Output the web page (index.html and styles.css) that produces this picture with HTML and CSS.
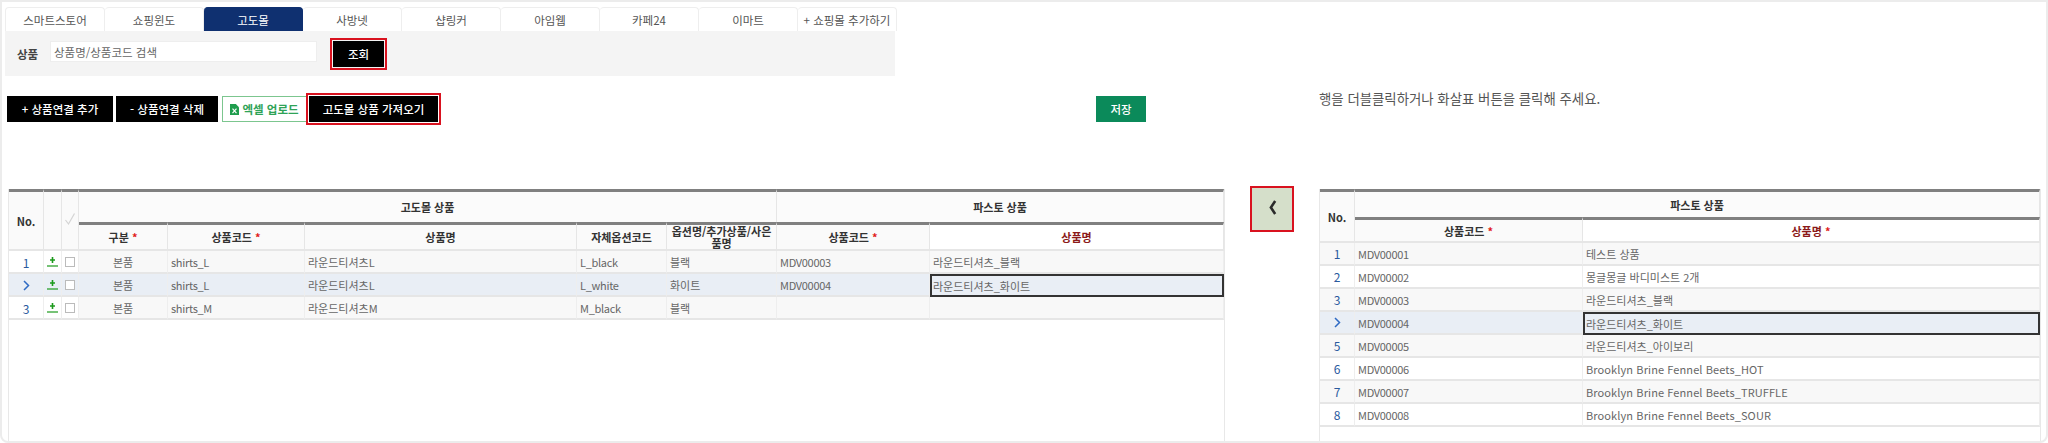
FILE: index.html
```html
<!DOCTYPE html>
<html lang="ko">
<head>
  <meta charset="UTF-8">
  <title>상품연결</title>
  <link rel="stylesheet" href="styles.css">
</head>
<body>
  <div class="frame">
    <section class="left-panel">
      <div class="tabs">
        <a class="tab">스마트스토어</a>
        <a class="tab">쇼핑윈도</a>
        <a class="tab active">고도몰</a>
        <a class="tab">사방넷</a>
        <a class="tab">샵링커</a>
        <a class="tab">아임웹</a>
        <a class="tab">카페24</a>
        <a class="tab">이마트</a>
        <a class="tab">+ 쇼핑몰 추가하기</a>
      </div>
      <div class="search-bar">
        <span class="search-label">상품</span>
        <input class="search-input" type="text" placeholder="상품명/상품코드 검색">
        <button class="btn btn-black btn-search marked">조회</button>
      </div>
      <div class="actions">
        <button class="btn btn-black btn-add">+ 상품연결 추가</button>
        <button class="btn btn-black btn-del">- 상품연결 삭제</button>
        <button class="btn btn-excel">
          <svg class="excel-icon" viewBox="0 0 10 12"><path d="M0 0h6.5L10 3.5V12H0z" fill="#1f9d4d"/><path d="M2.8 5l4.4 5M7.2 5l-4.4 5" stroke="#fff" stroke-width="1.3"/></svg>
          엑셀 업로드
        </button>
        <button class="btn btn-black btn-import marked">고도몰 상품 가져오기</button>
        <button class="btn btn-save">저장</button>
      </div>
      <div class="grid grid-left">
        <table>
          <colgroup>
            <col class="c-no"><col class="c-icon"><col class="c-check"><col class="c-type"><col class="c-code"><col class="c-name"><col class="c-opt"><col class="c-optname"><col class="c-fcode"><col>
          </colgroup>
          <thead>
            <tr class="head-top">
              <th rowspan="2">No.</th>
              <th rowspan="2"></th>
              <th rowspan="2" class="check-head">
                <svg class="check-mark" viewBox="0 0 12 14"><path d="M1.5 8l3 4L10.5 1.5" fill="none" stroke="#d4d4d4" stroke-width="1.2"/></svg>
              </th>
              <th colspan="5" class="group">고도몰 상품</th>
              <th colspan="2" class="group">파스토 상품</th>
            </tr>
            <tr class="head-sub">
              <th class="sub">구분 <i>*</i></th>
              <th class="sub">상품코드 <i>*</i></th>
              <th class="sub">상품명</th>
              <th class="sub">자체옵션코드</th>
              <th class="sub wrap">옵션명/추가상품/사은품명</th>
              <th class="sub">상품코드 <i>*</i></th>
              <th class="sub target">상품명</th>
            </tr>
          </thead>
          <tbody>
            <tr>
              <td class="no">1</td>
              <td class="tool"><svg class="plus" viewBox="0 0 11 10"><path d="M5.5 0v6M3 3h5" stroke="#1c9a1c" stroke-width="1.6"/><path d="M0 9h11" stroke="#1c9a1c" stroke-width="1.2"/></svg></td>
              <td class="tool"><span class="box"></span></td>
              <td class="ro center">본품</td><td class="ro en">shirts_L</td><td class="ro">라운드티셔츠L</td><td class="ro en">L_black</td><td class="ro">블랙</td><td class="ro en">MDV00003</td><td class="ro">라운드티셔츠_블랙</td>
            </tr>
            <tr class="selected">
              <td class="no"><svg class="pointer" viewBox="0 0 7 11"><path d="M1 1l4.5 4.5L1 10" fill="none" stroke="#2f6bc4" stroke-width="1.5"/></svg></td>
              <td class="tool"><svg class="plus" viewBox="0 0 11 10"><path d="M5.5 0v6M3 3h5" stroke="#1c9a1c" stroke-width="1.6"/><path d="M0 9h11" stroke="#1c9a1c" stroke-width="1.2"/></svg></td>
              <td class="tool"><span class="box"></span></td>
              <td class="ro center">본품</td><td class="ro en">shirts_L</td><td class="ro">라운드티셔츠L</td><td class="ro en">L_white</td><td class="ro">화이트</td><td class="ro en">MDV00004</td><td class="ro focus">라운드티셔츠_화이트</td>
            </tr>
            <tr>
              <td class="no">3</td>
              <td class="tool"><svg class="plus" viewBox="0 0 11 10"><path d="M5.5 0v6M3 3h5" stroke="#1c9a1c" stroke-width="1.6"/><path d="M0 9h11" stroke="#1c9a1c" stroke-width="1.2"/></svg></td>
              <td class="tool"><span class="box"></span></td>
              <td class="ro center">본품</td><td class="ro en">shirts_M</td><td class="ro">라운드티셔츠M</td><td class="ro en">M_black</td><td class="ro">블랙</td><td class="ro"></td><td class="ro"></td>
            </tr>
          </tbody>
        </table>
      </div>
    </section>

    <div class="move-col">
      <button class="move-btn">
        <svg viewBox="0 0 8 14"><path d="M6.5 1L2.5 7l4 6" fill="none" stroke="#2b2b2b" stroke-width="2.4"/></svg>
      </button>
    </div>

    <section class="right-panel">
      <p class="notice">행을 더블클릭하거나 화살표 버튼을 클릭해 주세요.</p>
      <div class="grid grid-right">
        <table>
          <colgroup>
            <col class="c-no"><col class="c-rcode"><col>
          </colgroup>
          <thead>
            <tr class="head-top">
              <th rowspan="2">No.</th>
              <th colspan="2" class="group">파스토 상품</th>
            </tr>
            <tr class="head-sub">
              <th class="sub">상품코드 <i>*</i></th>
              <th class="sub target">상품명 <i>*</i></th>
            </tr>
          </thead>
          <tbody>
            <tr class="gray"><td class="no">1</td><td class="en">MDV00001</td><td>테스트 상품</td></tr>
            <tr><td class="no">2</td><td class="en">MDV00002</td><td>몽글몽글 바디미스트 2개</td></tr>
            <tr class="gray"><td class="no">3</td><td class="en">MDV00003</td><td>라운드티셔츠_블랙</td></tr>
            <tr class="selected">
              <td class="no"><svg class="pointer" viewBox="0 0 7 11"><path d="M1 1l4.5 4.5L1 10" fill="none" stroke="#2f6bc4" stroke-width="1.5"/></svg></td>
              <td class="en">MDV00004</td><td class="focus">라운드티셔츠_화이트</td>
            </tr>
            <tr class="gray"><td class="no">5</td><td class="en">MDV00005</td><td>라운드티셔츠_아이보리</td></tr>
            <tr><td class="no">6</td><td class="en">MDV00006</td><td class="en-name">Brooklyn Brine Fennel Beets_HOT</td></tr>
            <tr class="gray"><td class="no">7</td><td class="en">MDV00007</td><td class="en-name">Brooklyn Brine Fennel Beets_TRUFFLE</td></tr>
            <tr><td class="no">8</td><td class="en">MDV00008</td><td class="en-name">Brooklyn Brine Fennel Beets_SOUR</td></tr>
          </tbody>
        </table>
      </div>
    </section>
  </div>
</body>
</html>
```

FILE: styles.css
```css
* {
  box-sizing: border-box;
  margin: 0;
  padding: 0;
}

html,
body {
  height: 443px;
  overflow: hidden;
}

body {
  font-family: "Noto Sans CJK KR", "Noto Sans", sans-serif;
  font-size: 11px;
  color: #666;
  background: #fff;
}

.frame {
  display: flex;
  height: 443px;
  padding: 5px 5px 0 3px;
  border: 2px solid #ececec;
  border-radius: 0 0 8px 8px;
}

/* 왼쪽 영역 */
.left-panel {
  display: flex;
  flex-direction: column;
  width: 1219px;
  flex: none;
}

.tabs {
  display: flex;
  height: 24px;
  width: 892px;
}

.tab {
  flex: 1;
  display: flex;
  align-items: center;
  justify-content: center;
  font-size: 11.5px;
  color: #555;
  border: 1px solid #eee;
  border-bottom: none;
  border-left: none;
  border-radius: 4px 4px 0 0;
  white-space: nowrap;
}

.tab:first-child {
  border-left: 1px solid #eee;
}

.tab.active {
  background: #0f3070;
  border-color: #0f3070;
  color: #fff;
}

.search-bar {
  display: flex;
  align-items: flex-start;
  width: 890px;
  height: 45px;
  padding: 10px 0 0 12px;
  background: #f4f4f4;
}

.search-label {
  width: 33px;
  line-height: 26px;
  font-weight: 700;
  font-size: 11.5px;
  color: #444;
}

.search-input {
  width: 267px;
  height: 21px;
  padding: 0 3px;
  border: 1px solid #eee;
  background: #fff;
  font: 11.5px "Noto Sans CJK KR", sans-serif;
}

.search-input::placeholder {
  color: #666;
}

.btn {
  border: none;
  font: 500 11.5px "Noto Sans CJK KR", sans-serif;
  white-space: nowrap;
}

.btn-black {
  background: #000;
  color: #fff;
}

.marked {
  outline: 2px solid #d9121f;
  outline-offset: 1px;
}

.btn-search {
  width: 51px;
  height: 26px;
  margin-left: 16px;
}

.actions {
  display: flex;
  width: 1141px;
  height: 26px;
  margin-top: 20px;
  padding-left: 2px;
}

.btn-add {
  width: 106px;
}

.btn-del {
  width: 102px;
  margin-left: 3px;
}

.btn-excel {
  display: flex;
  align-items: center;
  justify-content: center;
  gap: 3px;
  width: 85px;
  margin-left: 4px;
  background: #fff;
  border: 1px solid #7cc68f;
  color: #2fa357;
  font-weight: 700;
}

.excel-icon {
  width: 9px;
  height: 11px;
}

.btn-import {
  width: 129px;
  margin-left: 2px;
}

.btn-save {
  width: 50px;
  margin-left: auto;
  background: #0b8a5a;
  color: #fff;
}

/* 그리드 */
.grid {
  flex: 1;
  border-left: 1px solid #e8e8e8;
  border-right: 1px solid #e8e8e8;
}

.grid-left {
  width: 1217px;
  margin: 67px 0 0 3px;
}

.grid table {
  width: 100%;
  border-collapse: separate;
  border-spacing: 0;
  table-layout: fixed;
}

.c-no { width: 35px; }
.c-icon { width: 18px; }
.c-check { width: 17px; }
.c-type { width: 89px; }
.c-code { width: 137px; }
.c-name { width: 272px; }
.c-opt { width: 90px; }
.c-optname { width: 110px; }
.c-fcode { width: 153px; }
.c-rcode { width: 228px; }

th {
  background: #fafafa;
  color: #333;
  font-weight: 700;
  text-align: center;
  border-top: 3px solid #808080;
  border-right: 1px solid #e6e6e6;
  border-bottom: 2px solid #e6e6e6;
  vertical-align: middle;
}

th i {
  color: #e01b1b;
  font-style: normal;
}

th.group {
  border-bottom: none;
  background: #fbfbfb;
}

th.wrap {
  line-height: 12px;
}

th.target {
  background: #fff;
  color: #8b1a1a;
}

.check-mark {
  width: 12px;
  height: 14px;
}

.grid-left .head-top { height: 33px; }
.grid-left .head-sub { height: 29px; }
.grid-right .head-top { height: 28px; }
.grid-right .head-sub { height: 26px; }

td {
  height: 23px;
  padding: 0 3px;
  border-right: 1px solid #eee;
  border-bottom: 2px solid #e6e6e6;
  background: #fff;
  white-space: nowrap;
  overflow: hidden;
}

.grid-left td {
  padding-top: 1px;
}

td.en {
  letter-spacing: -0.3px;
}

td.en-name {
  letter-spacing: 0.1px;
}

td.no {
  text-align: center;
  color: #2a5a9e;
  font-size: 12px;
}

td.tool {
  text-align: center;
  padding: 0;
}

td.ro,
tr.gray td {
  background: #f8f8f8;
}

td.center {
  text-align: center;
}

tr.selected td {
  background: #e9eef5;
}

td.focus,
tr.selected td.focus {
  border: 2px solid #333;
  padding: 0 1px;
}

.plus {
  display: block;
  width: 11px;
  height: 10px;
  margin: 0 auto;
}

.box {
  display: block;
  width: 10px;
  height: 10px;
  margin: 0 auto;
  border: 1px solid #bbb;
  background: #fff;
}

.pointer {
  display: block;
  width: 7px;
  height: 11px;
  margin: 0 auto;
}

/* 가운데 화살표 */
.move-col {
  width: 95px;
  flex: none;
  padding: 179px 0 0 26px;
}

.move-btn {
  display: flex;
  align-items: center;
  justify-content: center;
  width: 44px;
  height: 46px;
  border: 2px solid #d9121f;
  background: #d5dfca;
}

.move-btn svg {
  width: 9px;
  height: 15px;
  margin-bottom: 3px;
}

/* 오른쪽 영역 */
.right-panel {
  display: flex;
  flex-direction: column;
  flex: 1;
}

.notice {
  margin-top: 81px;
  height: 101px;
  font-size: 13.4px;
  line-height: 20px;
  color: #555;
}
```
